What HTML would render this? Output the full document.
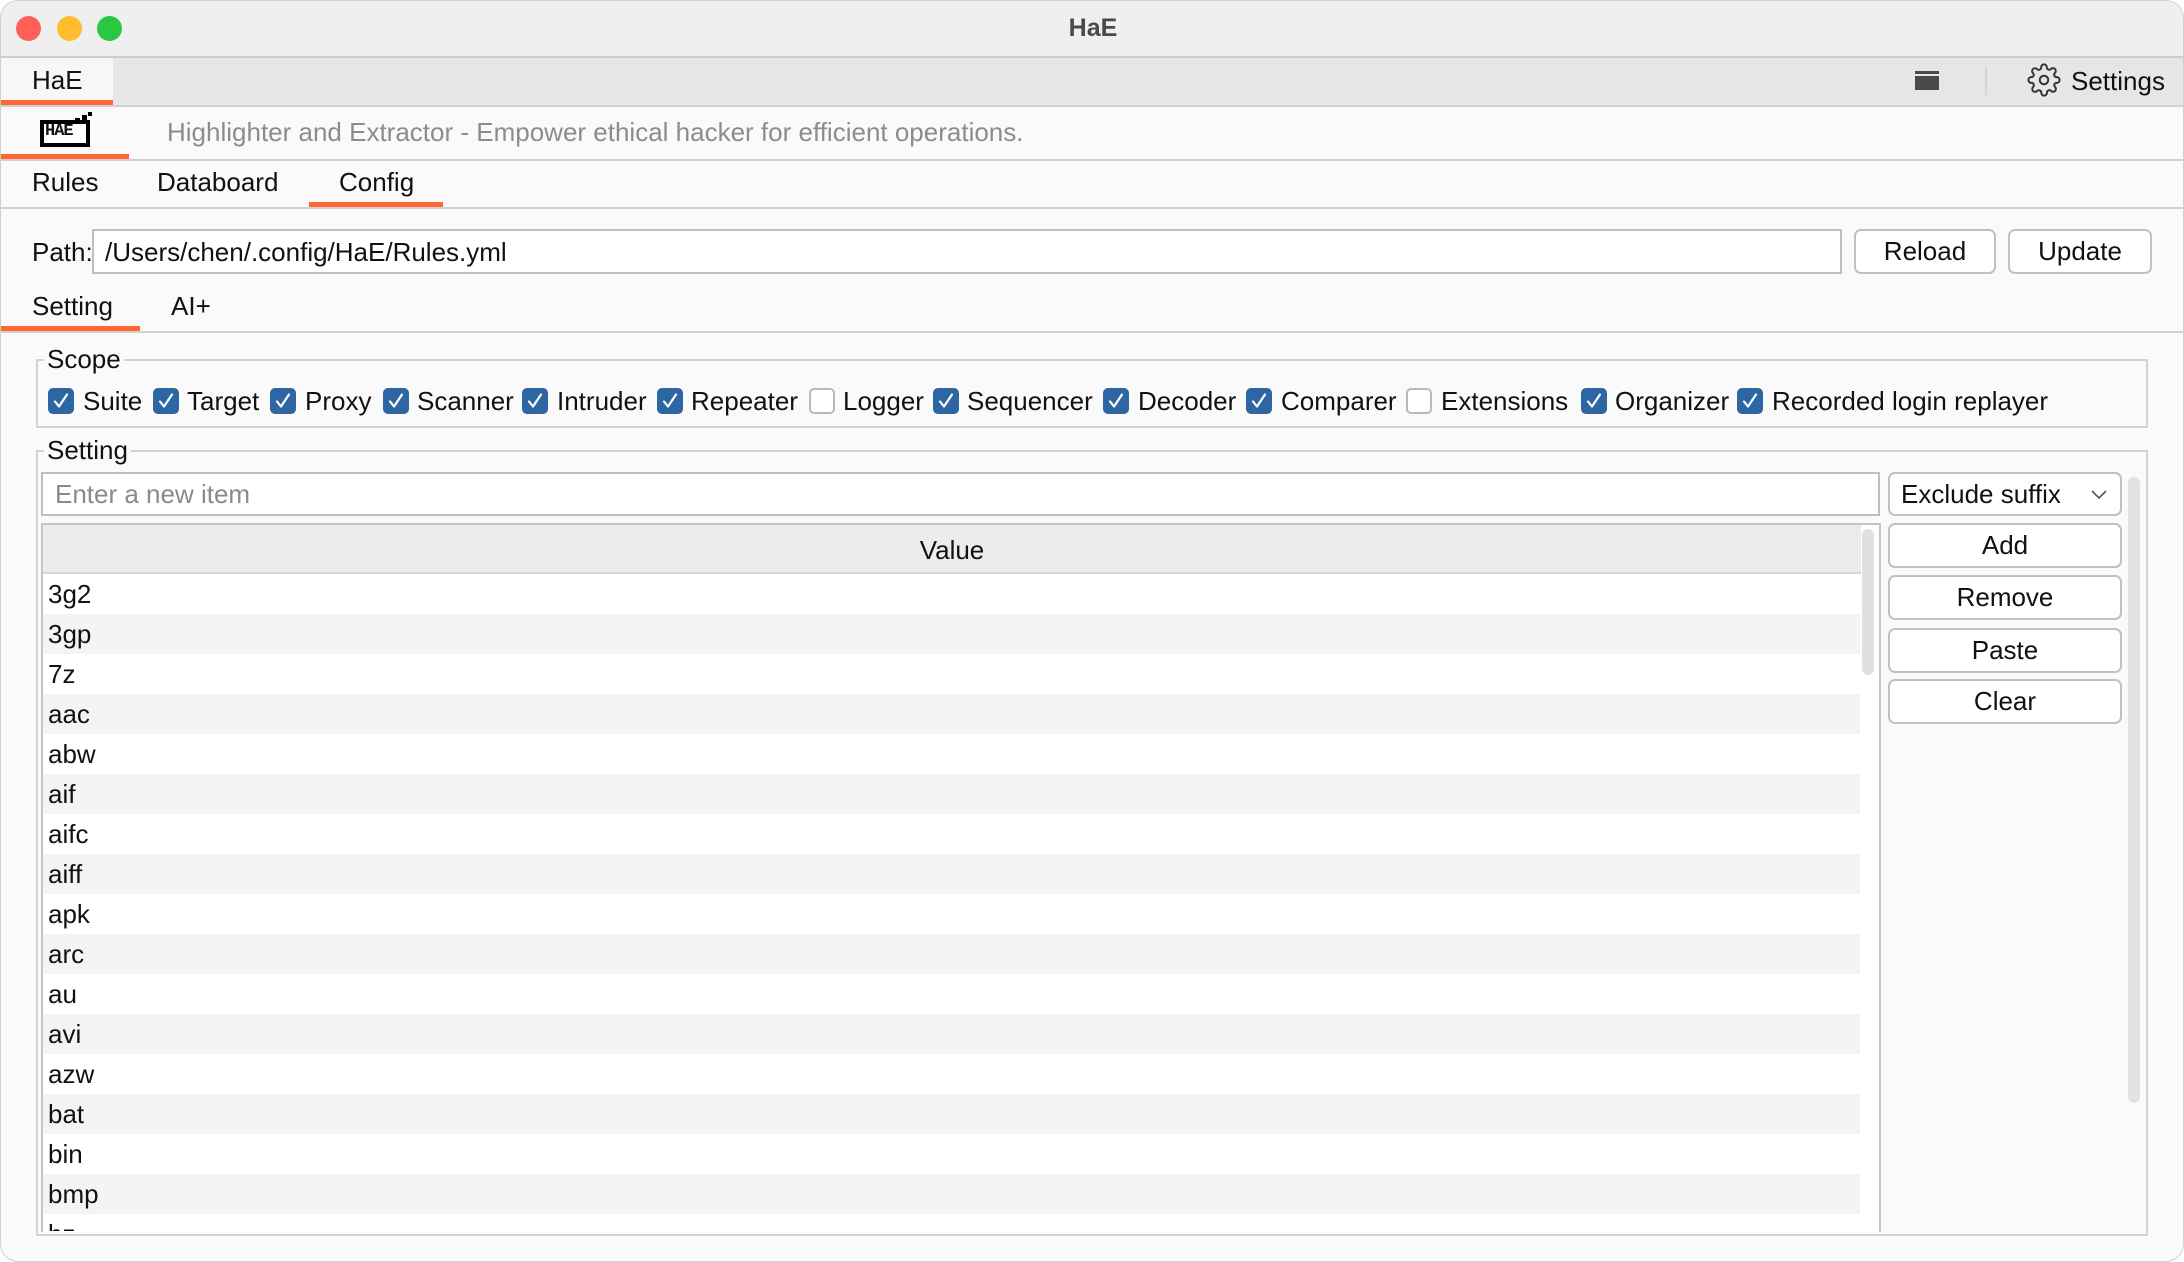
<!DOCTYPE html>
<html><head><meta charset="utf-8"><style>
*{margin:0;padding:0;box-sizing:border-box}
body{width:2184px;height:1262px;background:#fff;font-family:"Liberation Sans",Arial,sans-serif;color:#111;overflow:hidden;position:relative}
.a{position:absolute}
.win{left:0;top:0;width:2184px;height:1262px;background:#fafafa;border-radius:18px;overflow:hidden;border:1px solid #cfcfcf}
.t{font-size:26px;line-height:30px;white-space:nowrap}
.hl{height:2px;background:#d0d0d0}
.or{height:5px;background:#ff6633}
.btn{border:2px solid #c2c0c0;border-radius:7px;background:#fff;text-align:center;font-size:26px;line-height:41px}
.cb{position:absolute;width:26px;height:26px;border-radius:5px;background:#2d66a3;top:387px}
.cb svg{position:absolute;left:4px;top:4px}
.ucb{position:absolute;width:26px;height:26px;border-radius:5px;background:#fff;border:2px solid #b9b9b9;top:387px}
.lb{position:absolute;top:385px;font-size:26px;line-height:30px;white-space:nowrap}
.rows{position:absolute;left:42px;top:573px;width:1817px;height:657px;overflow:hidden}
.rows div{height:40px;font-size:26px;line-height:40px;padding-left:5px;background:#fff}
.rows div:nth-child(even){background:#f4f4f4}
</style></head><body>
<div class="a win">
<div class="a" style="left:0;top:0;width:2184px;height:56px;background:#efefef"></div>
<div class="a" style="left:15px;top:15px;width:25px;height:25px;border-radius:50%;background:#fe5f57"></div>
<div class="a" style="left:56px;top:15px;width:25px;height:25px;border-radius:50%;background:#febc2e"></div>
<div class="a" style="left:96px;top:15px;width:25px;height:25px;border-radius:50%;background:#28c840"></div>
<div class="a t" style="left:0;width:2184px;top:12px;text-align:center;font-size:25px;font-weight:bold;color:#4a4a4a">HaE</div>
<div class="a" style="left:0;top:55px;width:2184px;height:2px;background:#cdcdcd"></div>
<div class="a" style="left:0;top:57px;width:2184px;height:47px;background:#e6e6e6"></div>
<div class="a" style="left:0;top:57px;width:112px;height:47px;background:#f7f7f7"></div>
<div class="a t" style="left:31px;top:64px;font-size:26px">HaE</div>
<div class="a or" style="left:0;top:99px;width:112px"></div>
<div class="a" style="left:1914px;top:70px;width:24px;height:19px;background:#4a4a4a"></div>
<div class="a" style="left:1914px;top:73px;width:24px;height:2px;background:#e6e6e6"></div>
<div class="a" style="left:1984px;top:66px;width:2px;height:28px;background:#d4d4d4"></div>
<svg class="a" style="left:2026px;top:62px" width="34" height="34" viewBox="0 0 24 24" fill="none" stroke="#333" stroke-width="1.4"><circle cx="12" cy="12" r="3"/><path d="M19.4 15a1.65 1.65 0 0 0 .33 1.820l.06.06a2 2 0 1 1-2.83 2.83l-.06-.06a1.65 1.65 0 0 0-1.82-.33 1.65 1.65 0 0 0-1 1.51V21a2 2 0 1 1-4 0v-.09A1.65 1.65 0 0 0 9 19.4a1.65 1.65 0 0 0-1.82.33l-.06.06a2 2 0 1 1-2.830-2.830l.06-.06A1.65 1.65 0 0 0 4.68 15a1.65 1.65 0 0 0-1.51-1H3a2 2 0 1 1 0-4h.09A1.65 1.65 0 0 0 4.6 9a1.65 1.65 0 0 0-.33-1.82l-.06-.06a2 2 0 1 1 2.83-2.83l.06.06A1.65 1.65 0 0 0 9 4.68 1.65 1.65 0 0 0 10 3.17V3a2 2 0 1 1 4 0v.09a1.65 1.65 0 0 0 1 1.51 1.65 1.65 0 0 0 1.82-.33l.06-.06a2 2 0 1 1 2.83 2.83l-.06.06A1.65 1.65 0 0 0 19.4 9a1.65 1.65 0 0 0 1.51 1H21a2 2 0 1 1 0 4h-.09a1.65 1.65 0 0 0-1.51 1z"/></svg>
<div class="a t" style="left:2070px;top:65px;font-size:26px">Settings</div>
<div class="a hl" style="left:0;top:104px;width:2184px"></div>
<!-- logo -->
<div class="a" style="left:39px;top:119px;width:50px;height:27px;border:4px solid #000;background:#fff"></div>
<div class="a" style="left:44px;top:121px;font-size:17px;font-weight:bold;font-family:'Liberation Mono',monospace;line-height:19px;letter-spacing:-1px">HAE</div>
<div class="a" style="left:74px;top:117px;width:5px;height:5px;background:#000"></div>
<div class="a" style="left:81px;top:114px;width:5px;height:5px;background:#000"></div>
<div class="a" style="left:87px;top:111px;width:4px;height:4px;background:#000"></div>
<div class="a t" style="left:166px;top:116px;color:#8c8c8c;font-size:26px">Highlighter and Extractor - Empower ethical hacker for efficient operations.</div>
<div class="a or" style="left:0;top:153px;width:128px"></div>
<div class="a hl" style="left:0;top:158px;width:2184px"></div>
<!-- main tabs -->
<div class="a t" style="left:31px;top:166px">Rules</div>
<div class="a t" style="left:156px;top:166px">Databoard</div>
<div class="a t" style="left:338px;top:166px">Config</div>
<div class="a or" style="left:308px;top:201px;width:134px"></div>
<div class="a hl" style="left:0;top:206px;width:2184px"></div>
<!-- path -->
<div class="a t" style="left:31px;top:236px">Path:</div>
<div class="a" style="left:91px;top:228px;width:1750px;height:45px;border:2px solid #c0bebe;background:#fff"></div>
<div class="a t" style="left:104px;top:236px">/Users/chen/.config/HaE/Rules.yml</div>
<div class="a btn" style="left:1853px;top:228px;width:142px;height:45px">Reload</div>
<div class="a btn" style="left:2007px;top:228px;width:144px;height:45px">Update</div>
<!-- setting tabs -->
<div class="a t" style="left:31px;top:290px">Setting</div>
<div class="a t" style="left:170px;top:290px">AI+</div>
<div class="a or" style="left:0;top:325px;width:139px"></div>
<div class="a hl" style="left:0;top:330px;width:2184px"></div>
<!-- scope -->
<div class="a" style="left:35px;top:358px;width:2112px;height:69px;border:2px solid #d2d2d2"></div>
<div class="a t" style="left:43px;top:343px;background:#fafafa;padding:0 3px">Scope</div>
<div class="cb" style="left:47px"><svg width="18" height="18" viewBox="0 0 18 18"><path d="M3 9.5l4 5 8-12" fill="none" stroke="#fff" stroke-width="2.2" stroke-linecap="round" stroke-linejoin="round"/></svg></div><div class="lb" style="left:82px">Suite</div>
<div class="cb" style="left:152px"><svg width="18" height="18" viewBox="0 0 18 18"><path d="M3 9.5l4 5 8-12" fill="none" stroke="#fff" stroke-width="2.2" stroke-linecap="round" stroke-linejoin="round"/></svg></div><div class="lb" style="left:186px">Target</div>
<div class="cb" style="left:269px"><svg width="18" height="18" viewBox="0 0 18 18"><path d="M3 9.5l4 5 8-12" fill="none" stroke="#fff" stroke-width="2.2" stroke-linecap="round" stroke-linejoin="round"/></svg></div><div class="lb" style="left:304px">Proxy</div>
<div class="cb" style="left:382px"><svg width="18" height="18" viewBox="0 0 18 18"><path d="M3 9.5l4 5 8-12" fill="none" stroke="#fff" stroke-width="2.2" stroke-linecap="round" stroke-linejoin="round"/></svg></div><div class="lb" style="left:416px">Scanner</div>
<div class="cb" style="left:521px"><svg width="18" height="18" viewBox="0 0 18 18"><path d="M3 9.5l4 5 8-12" fill="none" stroke="#fff" stroke-width="2.2" stroke-linecap="round" stroke-linejoin="round"/></svg></div><div class="lb" style="left:556px">Intruder</div>
<div class="cb" style="left:656px"><svg width="18" height="18" viewBox="0 0 18 18"><path d="M3 9.5l4 5 8-12" fill="none" stroke="#fff" stroke-width="2.2" stroke-linecap="round" stroke-linejoin="round"/></svg></div><div class="lb" style="left:690px">Repeater</div>
<div class="ucb" style="left:808px"></div><div class="lb" style="left:842px">Logger</div>
<div class="cb" style="left:932px"><svg width="18" height="18" viewBox="0 0 18 18"><path d="M3 9.5l4 5 8-12" fill="none" stroke="#fff" stroke-width="2.2" stroke-linecap="round" stroke-linejoin="round"/></svg></div><div class="lb" style="left:966px">Sequencer</div>
<div class="cb" style="left:1102px"><svg width="18" height="18" viewBox="0 0 18 18"><path d="M3 9.5l4 5 8-12" fill="none" stroke="#fff" stroke-width="2.2" stroke-linecap="round" stroke-linejoin="round"/></svg></div><div class="lb" style="left:1137px">Decoder</div>
<div class="cb" style="left:1245px"><svg width="18" height="18" viewBox="0 0 18 18"><path d="M3 9.5l4 5 8-12" fill="none" stroke="#fff" stroke-width="2.2" stroke-linecap="round" stroke-linejoin="round"/></svg></div><div class="lb" style="left:1280px">Comparer</div>
<div class="ucb" style="left:1405px"></div><div class="lb" style="left:1440px">Extensions</div>
<div class="cb" style="left:1580px"><svg width="18" height="18" viewBox="0 0 18 18"><path d="M3 9.5l4 5 8-12" fill="none" stroke="#fff" stroke-width="2.2" stroke-linecap="round" stroke-linejoin="round"/></svg></div><div class="lb" style="left:1614px">Organizer</div>
<div class="cb" style="left:1736px"><svg width="18" height="18" viewBox="0 0 18 18"><path d="M3 9.5l4 5 8-12" fill="none" stroke="#fff" stroke-width="2.2" stroke-linecap="round" stroke-linejoin="round"/></svg></div><div class="lb" style="left:1771px">Recorded login replayer</div>
<!-- setting group -->
<div class="a" style="left:35px;top:449px;width:2112px;height:786px;border:2px solid #d2d2d2"></div>
<div class="a t" style="left:43px;top:434px;background:#fafafa;padding:0 3px">Setting</div>
<div class="a" style="left:40px;top:471px;width:1839px;height:44px;border:2px solid #c0bebe;background:#fff"></div>
<div class="a t" style="left:54px;top:478px;color:#8a8a8a">Enter a new item</div>
<div class="a" style="left:1887px;top:471px;width:234px;height:44px;border:2px solid #c2c0c0;border-radius:7px;background:#fff"></div>
<div class="a t" style="left:1900px;top:478px">Exclude suffix</div>
<svg class="a" style="left:2089px;top:487px" width="18" height="12" viewBox="0 0 18 12"><path d="M2 3l7 7 7-7" fill="none" stroke="#555" stroke-width="1.6"/></svg>
<div class="a btn" style="left:1887px;top:522px;width:234px;height:45px">Add</div>
<div class="a btn" style="left:1887px;top:574px;width:234px;height:45px">Remove</div>
<div class="a btn" style="left:1887px;top:627px;width:234px;height:45px">Paste</div>
<div class="a btn" style="left:1887px;top:678px;width:234px;height:45px">Clear</div>
<div class="a" style="left:2127px;top:476px;width:12px;height:626px;border-radius:6px;background:#e2e2e2"></div>
<!-- table -->
<div class="a" style="left:40px;top:522px;width:1840px;height:709px;border:2px solid #c4c4c4;border-bottom:none;background:#fff"></div>
<div class="a" style="left:42px;top:524px;width:1818px;height:49px;background:#ececec;border-bottom:2px solid #d6d6d6"></div>
<div class="a t" style="left:42px;top:534px;width:1818px;text-align:center">Value</div>
<div class="rows">
<div>3g2</div><div>3gp</div><div>7z</div><div>aac</div><div>abw</div><div>aif</div><div>aifc</div><div>aiff</div><div>apk</div><div>arc</div><div>au</div><div>avi</div><div>azw</div><div>bat</div><div>bin</div><div>bmp</div><div>bz</div>
</div>
<div class="a" style="left:1861px;top:528px;width:12px;height:146px;border-radius:6px;background:#e0e0e0"></div>
</div>
</body></html>
